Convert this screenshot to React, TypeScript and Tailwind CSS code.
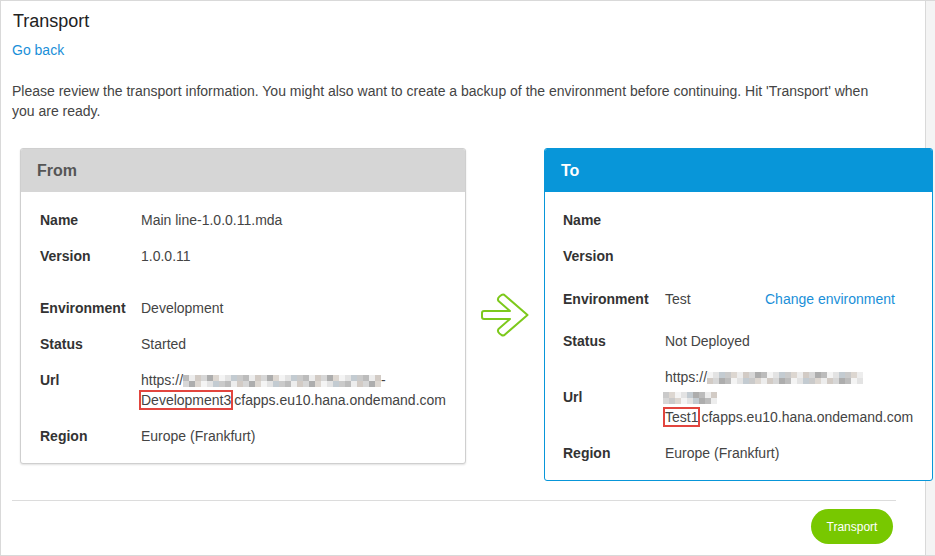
import React from 'react';

const blurTones = [
  'bg-[#ededed]',
  'bg-[#e3e3e3]',
  'bg-[#d7d7d7]',
  'bg-[#cacaca]',
  'bg-[#bcbcbc]',
  'bg-[#f4f4f4]',
  'bg-[#d2cbc5]',
  'bg-[#c3cbd1]',
  'bg-[#adadad]',
  'bg-[#ddd7d1]',
];

// pixelated stand-in for the masked part of the url
const Blur: React.FC<{ w: number; seed: number }> = ({ w, seed }) => {
  const cols = Math.floor(w / 6);
  const cells = Array.from({ length: cols * 2 }, (_, i) => blurTones[(seed * 7 + i * 13 + (i % 5) * 3) % blurTones.length]);
  return (
    <span className="inline-flex flex-wrap align-middle" style={{ width: cols * 6 }}>
      {cells.map((c, i) => (
        <span key={i} className={`block w-[6px] h-[6px] ${c}`} />
      ))}
    </span>
  );
};

const Row: React.FC<{ label: string; h: string; labelW: string; top?: boolean; children?: React.ReactNode }> = ({ label, h, labelW, top, children }) => (
  <div className={`flex items-center ${h}`}>
    <div className={`${labelW} shrink-0 font-bold text-[#333] ${top ? 'self-start mt-[8px]' : ''}`}>{label}</div>
    <div className="text-[#444]">{children}</div>
  </div>
);

const Arrow = () => (
  <svg width="56" height="50" viewBox="0 0 56 50" fill="none">
    <path
      d="M6 21 L32 21 L20.5 11 Q19 8.5 21.5 6.5 L23.5 5 Q25.5 4 27 5.5 L49.5 25 L27 44.5 Q25.5 46 23.5 45 L21.5 43.5 Q19 41.5 20.5 39 L32 29 L6 29 Q4 29 4 27 L4 23 Q4 21 6 21 Z"
      stroke="#7dc91c"
      strokeWidth="2"
      strokeLinejoin="round"
    />
  </svg>
);

const App: React.FC = () => {
  return (
    <div className="w-[935px] h-[556px] flex bg-[#f4f4f4] border-t border-b border-l border-[#d9d9d9] font-['Liberation_Sans',Arial,sans-serif] text-[14px] overflow-hidden">
      <div className="w-[925px] h-full shrink-0 bg-white border-r border-[#d9d9d9] pl-[11px] pr-[29px] pt-[9px]">
        {/* Header */}
        <h1 className="text-[18px] leading-[22px] text-[#222] ml-px">Transport</h1>
        <a className="block mt-[8px] leading-[20px] text-[#1a8fd8] cursor-pointer">Go back</a>
        <p className="mt-[21px] w-[862px] leading-[20px] text-[#444]">
          Please review the transport information. You might also want to create a backup of the environment before continuing. Hit 'Transport' when you are ready.
        </p>

        {/* From / To */}
        <div className="mt-[27px] flex items-start">
          <div className="ml-[8px] w-[446px] shrink-0 bg-white border border-[#cfcfcf] rounded-[3px] shadow-[0_1px_2px_rgba(0,0,0,0.12)] overflow-hidden">
            <div className="h-[43px] bg-[#d6d6d6] pl-[16px] flex items-center text-[16px] font-bold text-[#555]">From</div>
            <div className="pl-[19px] pt-[10px] pb-[9px] leading-[20px]">
              <Row label="Name" h="h-[36px]" labelW="w-[101px]">Main line-1.0.0.11.mda</Row>
              <Row label="Version" h="h-[36px]" labelW="w-[101px]">1.0.0.11</Row>
              <div className="h-[16px]" />
              <Row label="Environment" h="h-[36px]" labelW="w-[101px]">Development</Row>
              <Row label="Status" h="h-[36px]" labelW="w-[101px]">Started</Row>
              <Row label="Url" h="h-[56px]" labelW="w-[101px]" top>
                <div>
                  https://<Blur w={201} seed={2} />-
                </div>
                <div>
                  <span className="outline-2 outline-solid outline-[#e2453e]">Development3</span>
                  <span className="ml-[3px]">cfapps.eu10.hana.ondemand.com</span>
                </div>
              </Row>
              <Row label="Region" h="h-[36px]" labelW="w-[101px]">Europe (Frankfurt)</Row>
            </div>
          </div>

          <div className="w-[78px] h-[333px] shrink-0 flex items-center pl-[12px]">
            <Arrow />
          </div>

          <div className="relative z-10 w-[389px] shrink-0 bg-white border border-[#0896d9] rounded-[3px] overflow-hidden">
            <div className="h-[43px] bg-[#0896d9] pl-[16px] flex items-center text-[16px] font-bold text-white">To</div>
            <div className="pl-[18px] pt-[10px] pb-[9px] leading-[20px]">
              <Row label="Name" h="h-[36px]" labelW="w-[102px]" />
              <Row label="Version" h="h-[36px]" labelW="w-[102px]" />
              <Row label="Environment" h="h-[49px]" labelW="w-[102px]">
                <div className="flex">
                  <span className="w-[100px]">Test</span>
                  <a className="text-[#1a8fd8] cursor-pointer">Change environment</a>
                </div>
              </Row>
              <Row label="Status" h="h-[36px]" labelW="w-[102px]">Not Deployed</Row>
              <Row label="Url" h="h-[76px]" labelW="w-[102px]">
                <div>
                  https://<Blur w={157} seed={5} />
                </div>
                <div className="-ml-[2px]">
                  <Blur w={59} seed={9} />
                </div>
                <div>
                  <span className="outline-2 outline-solid outline-[#e2453e]">Test1</span>
                  <span className="ml-[3px]">cfapps.eu10.hana.ondemand.com</span>
                </div>
              </Row>
              <Row label="Region" h="h-[36px]" labelW="w-[102px]">Europe (Frankfurt)</Row>
            </div>
          </div>
        </div>

        {/* Footer */}
        <div className="mt-[19px] h-px bg-[#dcdcdc]" />
        <div className="mt-[8px] flex justify-end pr-[3px]">
          <button className="h-[35px] w-[82px] rounded-full bg-[#78c800] text-white text-[12px]">Transport</button>
        </div>
      </div>
    </div>
  );
};

export default App;
